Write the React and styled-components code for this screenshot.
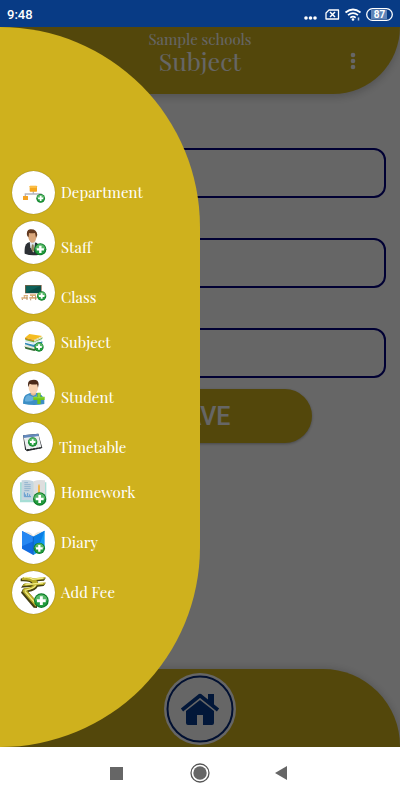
import React from 'react'
import styled, { createGlobalStyle } from 'styled-components'

const GlobalStyle = createGlobalStyle`
  * {
    box-sizing: border-box;
  }
  body {
    margin: 0;
    font-family: Roboto, sans-serif;
  }
`
const Root = styled.div`
  min-height: 100vh;
  display: flex;
  flex-direction: column;
  background: #ffffff;
`
const StatusBar = styled.div`
  display: flex;
  align-items: center;
  justify-content: space-between;
  height: 27px;
  padding: 2px 7px 0;
  background: #083b85;
  color: #ffffff;
`
const Time = styled.div`
  font-size: 13px;
  font-weight: 500;
`
const StatusIcons = styled.svg`
  width: 92px;
  height: 20px;
`
const Screen = styled.div`
  position: relative;
  flex: 1;
  display: flex;
  flex-direction: column;
  overflow: hidden;
`
const Header = styled.header`
  display: grid;
  grid-template-columns: 1fr auto 1fr;
  align-items: center;
  height: 67px;
  background: #cfb11d;
  border-bottom-right-radius: 67px;
  box-shadow: 0 3px 8px rgba(0, 0, 0, 0.2);
  color: #ffffff;
  font-family: 'Playfair Display', 'Liberation Serif', serif;
`
const Titles = styled.div`
  grid-column: 2;
  height: 67px;
  text-align: center;
`
const School = styled.div`
  padding-top: 2px;
  font-size: 15px;
  line-height: 20px;
`
const Title = styled.h1`
  margin: 0;
  font-size: 25px;
  font-weight: 400;
  line-height: 24px;
`
const MenuButton = styled.button`
  justify-self: end;
  margin-right: 35px;
  padding: 0;
  width: 24px;
  height: 24px;
  border: 0;
  background: none;
`
const Form = styled.form`
  flex: 1;
  display: flex;
  flex-direction: column;
  align-items: center;
  gap: 40px;
  padding: 54px 14px 0;
`
const Field = styled.input`
  width: 100%;
  height: 50px;
  padding: 0 12px;
  border: 2px solid #000080;
  border-radius: 12px;
  background: #ffffff;
  font-size: 16px;
`
const SaveButton = styled.button`
  width: 60%;
  height: 54px;
  margin-top: -29px;
  border: 0;
  border-radius: 27px;
  background: #cfb11d;
  box-shadow: 0 1px 3px rgba(0, 0, 0, 0.3);
  color: #ffffff;
  font-family: Roboto, sans-serif;
  font-size: 25px;
  font-weight: 500;
`
const Footer = styled.footer`
  display: flex;
  align-items: center;
  justify-content: center;
  height: 78px;
  padding-top: 2px;
  background: #cfb11d;
  border-top-right-radius: 77px;
  box-shadow: 0 0 8px rgba(0, 0, 0, 0.2);
`
const HomeLink = styled.a`
  display: flex;
  width: 72px;
  height: 72px;
`
const Scrim = styled.div`
  position: absolute;
  inset: 0;
  background: rgba(0, 0, 0, 0.6);
`
const Drawer = styled.nav`
  position: absolute;
  top: 0;
  bottom: 0;
  left: 0;
  width: 50%;
  display: flex;
  flex-direction: column;
  justify-content: center;
  background: #cfb11d;
  border-radius: 0 200px 200px 0;
`
const Menu = styled.ul`
  margin: 0;
  padding: 16px 0 0 12px;
  list-style: none;
`
const Item = styled.li`
  height: 50px;
`
const ItemLink = styled.a`
  display: flex;
  align-items: center;
  gap: 6px;
  height: 44px;
  color: #ffffff;
  font-family: 'Playfair Display', 'Liberation Serif', serif;
  font-size: 15px;
  line-height: 24px;
  text-decoration: none;
`
const Badge = styled.svg`
  flex: none;
  width: ${({ $small }) => ($small ? 41 : 43)}px;
  height: ${({ $small }) => ($small ? 41 : 43)}px;
  border-radius: 50%;
  background: #ffffff;
  box-shadow: 0 0 1px #6b5a10;
`
const Label = styled.span`
  padding-top: ${({ $low }) => ($low ? 10 : 0)}px;
`
const NavBar = styled.div`
  display: flex;
  align-items: center;
  justify-content: center;
  gap: 57px;
  height: 53px;
  padding-bottom: 1px;
  background: #ffffff;
`
const NavButton = styled.button`
  display: flex;
  width: 24px;
  height: 24px;
  padding: 0;
  border: 0;
  background: none;
`

const Plus = ({ x, y, r }) => (
  <g transform={`translate(${x} ${y}) scale(${r / 20})`}>
    <circle r="20" fill="#0b7a25" />
    <circle r="17" fill="#239b3e" />
    <path d="M-17 0A17 17 0 0 1 17 0Q0 -6 -17 0Z" fill="#58b868" />
    <path d="M-4 -12H4V-4H12V4H4V12H-4V4H-12V-4H-4Z" fill="#ffffff" />
  </g>
)

const DepartmentIcon = () => (
  <>
    <path d="M64 60V69M40 76V69H87V76" fill="none" stroke="#b5b5bd" strokeWidth="4" />
    <rect x="53" y="44" width="22" height="18" rx="2" fill="#f5a71c" />
    <rect x="54" y="45" width="20" height="6" fill="#fbbd45" />
    <rect x="33" y="75" width="15" height="12" rx="1" fill="#f5a324" />
    <Plus x={86} y={82} r={13} />
  </>
)

const StaffIcon = () => (
  <>
    <path d="M38 98Q36 73 46 66L58 61L75 66Q83 74 82 101Q58 106 38 98Z" fill="#2c3035" />
    <path d="M53 62L70 61L65 95L55 79Z" fill="#dce5ee" />
    <path d="M60 70L65 71L66 88L61 94L58 82Z" fill="#91825a" />
    <path d="M48 35Q47 54 55 62Q63 70 70 60Q76 50 74 35Z" fill="#d9a77c" />
    <path d="M46 46Q41 28 54 25Q74 23 76 42L72 50L69 36Q58 38 51 36L50 48Z" fill="#623a21" />
    <Plus x={85} y={85} r={18} />
  </>
)

const ClassIcon = () => (
  <>
    <rect x="39" y="42" width="50" height="25" fill="#8b6346" />
    <rect x="41" y="44" width="46" height="22" fill="#0d6058" />
    <path d="M42 65L86 44V65Z" fill="#0a4d46" />
    <path d="M35 72H48V76H35ZM54 70H72V75H54ZM28 79H47V83H28ZM52 78H74V83H52Z" fill="#dbae78" />
    <path d="M31 83V87M45 76V87M56 83V88M71 75V87M37 76V80M61 75V79" stroke="#b58d65" strokeWidth="3" />
    <Plus x={89} y={75} r={14} />
  </>
)

const SubjectIcon = () => (
  <>
    <path d="M38 75L46 72L91 78L67 90L40 83Z" fill="#386c35" />
    <path d="M39 68L65 75L91 65V72L66 84L39 77Z" fill="#e5e8d9" />
    <path d="M39 65L64 71L91 61V66L65 78L39 70Z" fill="#318ab9" />
    <path d="M40 55L66 62L90 52V58L65 69L40 63Z" fill="#d4e8ec" />
    <path d="M40 52L65 58L91 48V53L65 64L40 57Z" fill="#6eaa3a" />
    <path d="M39 50L52 39L91 45L66 57Z" fill="#f5bd22" />
    <path d="M39 50L66 57V61L39 54Z" fill="#d58b15" />
    <path d="M66 58L90 47V51L66 62Z" fill="#eee2bd" />
    <Plus x={81} y={78} r={14} />
  </>
)

const StudentIcon = () => (
  <>
    <path d="M33 98Q33 73 47 69L56 65H73Q93 69 97 88V99Q64 106 33 98Z" fill="#3c8fc5" />
    <path d="M39 91Q38 76 49 72L64 78L79 71Q67 96 39 91Z" fill="#67addb" />
    <path d="M56 62H72V70Q64 78 56 70Z" fill="#e7b78e" />
    <ellipse cx="64" cy="50" rx="14" ry="18" fill="#f7d2b1" />
    <path d="M49 49Q44 28 60 27Q79 24 80 40L78 50L75 40Q62 42 53 38Z" fill="#4b2a19" />
    <path d="M76 65H86V77H98V87H86V99H76V87H64V77H76Z" fill="#6fc419" />
    <path d="M78 67H84V79H96V82H64V79H78Z" fill="#91d638" />
  </>
)

const TimetableIcon = () => (
  <>
    <path d="M33 40L79 35L91 78L45 88L39 82Z" fill="#2a2d31" />
    <path d="M35 46L80 41L88 76L43 83Z" fill="#eef1f2" />
    <path d="M33 40L79 35L81 42L35 48Z" fill="#6389bd" />
    <path d="M40 54L82 48M42 63L84 57M43 72L87 66M49 48L57 80M69 45L78 77" stroke="#ced5d8" strokeWidth="1" />
    <path d="M44 84L89 77" stroke="#25282b" strokeWidth="4" strokeDasharray="7 2" />
    <Plus x={62} y={60} r={14} />
  </>
)

const HomeworkIcon = () => (
  <>
    <path d="M24 34H103V94H24Z" fill="#a6ded5" />
    <path d="M29 28Q48 25 64 31V90Q46 84 29 88Z" fill="#c6d6e0" />
    <path d="M64 31Q80 25 99 28V88Q81 84 64 90Z" fill="#dedede" />
    <path d="M37 35H48M37 41H56M37 47H56M37 53H56M37 59H52" stroke="#91b2ce" strokeWidth="3" />
    <path d="M37 64V77H57M41 75V70M47 75V66M53 75V70" fill="none" stroke="#5f9bcf" strokeWidth="3" />
    <path d="M78 45L81 38L84 45V73H78Z" fill="#f1b64c" />
    <Plus x={83} y={84} r={20} />
  </>
)

const DiaryIcon = () => (
  <>
    <path d="M36 33Q54 30 64 45Q74 30 94 32L64 58Z" fill="#e9e6df" />
    <path d="M30 30L64 47V102L30 83Z" fill="#116be0" />
    <path d="M64 47L98 29V83L64 102Z" fill="#159bf1" />
    <path d="M30 30L64 47V61L30 76Z" fill="#2687f2" />
    <path d="M64 47L98 29L80 78L64 91Z" fill="#0a7de5" />
    <path d="M64 47V102" stroke="#0750ac" strokeWidth="2" />
    <Plus x={82} y={82} r={17} />
  </>
)

const FeeIcon = () => (
  <>
    <path d="M26 23Q40 13 65 25L101 21L96 29L76 31Q79 35 79 39L101 37L95 45L77 47Q72 58 49 63L76 94L75 111L65 110L27 65L33 53Q57 55 61 47L27 50L35 39L61 41Q57 29 26 31Z" fill="#454011" />
    <path d="M30 21Q42 14 65 22L102 18L96 25L73 28Q78 32 77 37L102 34L96 41L75 43Q69 55 44 58L76 92L71 107L31 61L36 51Q58 51 63 43L31 45L38 37L63 38Q58 26 30 27Z" fill="#b7ab28" />
    <path d="M36 20Q50 17 63 25L94 21M40 41L93 36M38 58Q66 54 71 43M39 61L71 98" fill="none" stroke="#f1eb83" strokeWidth="4" />
    <Plus x={88} y={89} r={22} />
  </>
)

const items = [
  { label: 'Department', icon: DepartmentIcon },
  { label: 'Staff', icon: StaffIcon, low: true },
  { label: 'Class', icon: ClassIcon, low: true },
  { label: 'Subject', icon: SubjectIcon },
  { label: 'Student', icon: StudentIcon, low: true },
  { label: 'Timetable', icon: TimetableIcon, low: true, small: true },
  { label: 'Homework', icon: HomeworkIcon },
  { label: 'Diary', icon: DiaryIcon },
  { label: 'Add Fee', icon: FeeIcon }
]

const MenuItem = ({ label, icon: Icon, low, small }) => (
  <Item>
    <ItemLink href="#">
      <Badge viewBox={small ? '0 0 123 123' : '0 0 129 129'} $small={small} aria-hidden="true">
        <Icon />
      </Badge>
      <Label $low={low}>{label}</Label>
    </ItemLink>
  </Item>
)

const Status = () => (
  <StatusBar>
    <Time>9:48</Time>
    <StatusIcons viewBox="0 0 92 20" fill="none">
      <g fill="#ffffff">
        <circle cx="5" cy="13" r="1.8" />
        <circle cx="9.5" cy="13" r="1.8" />
        <circle cx="14" cy="13" r="1.8" />
      </g>
      <path d="M28 5H37.5V14H25V8Z" stroke="#ffffff" strokeWidth="1.3" strokeLinejoin="round" />
      <path d="M29 7L34 12M34 7L29 12" stroke="#ffffff" strokeWidth="1.5" />
      <path d="M44.5 7.5Q52 1.5 59.5 7.5M47 10.2Q52 6.2 57 10.2M49.3 12.7Q52 10.7 54.7 12.7" stroke="#ffffff" strokeWidth="1.7" />
      <circle cx="52" cy="14.5" r="1.3" fill="#ffffff" />
      <path d="M57.5 12.5V15.5" stroke="#b7c8e0" strokeWidth="1.5" />
      <rect x="65.7" y="3.7" width="25.6" height="11.6" rx="5.8" stroke="#ffffff" strokeWidth="1.3" />
      <rect x="70" y="5" width="16" height="9" fill="#5f84b7" />
      <text x="78.5" y="13" fill="#ffffff" fontFamily="Roboto" fontSize="10" fontWeight="700" textAnchor="middle">87</text>
    </StatusIcons>
  </StatusBar>
)

const HomeIcon = () => (
  <svg width="72" height="72" viewBox="0 0 72 72" aria-hidden="true">
    <circle cx="36" cy="36" r="36" fill="#ffffff" />
    <circle cx="36" cy="36" r="32.5" fill="#ffffff" stroke="#052a7a" strokeWidth="2" />
    <path d="M18 37L36 22.5L54 37" fill="none" stroke="#053a90" strokeWidth="3.6" strokeLinejoin="round" />
    <path d="M44 21H50V33L44 28Z" fill="#053a90" />
    <path d="M36 27L50 38V50Q50 52 48 52H39V42H33V52H24Q22 52 22 50V38Z" fill="#053a90" />
  </svg>
)

const App = () => {
  return (
    <Root>
      <GlobalStyle />
      <Status />
      <Screen>
        <Header>
          <Titles>
            <School>Sample schools</School>
            <Title>Subject</Title>
          </Titles>
          <MenuButton type="button" aria-label="More options">
            <svg width="24" height="24" viewBox="0 0 24 24" fill="#ffffff">
              <circle cx="12" cy="6" r="2.3" />
              <circle cx="12" cy="12" r="2.3" />
              <circle cx="12" cy="18" r="2.3" />
            </svg>
          </MenuButton>
        </Header>
        <Form>
          <Field aria-label="Department" />
          <Field aria-label="Class" />
          <Field aria-label="Subject" />
          <SaveButton type="button">SAVE</SaveButton>
        </Form>
        <Footer>
          <HomeLink href="#" aria-label="Home">
            <HomeIcon />
          </HomeLink>
        </Footer>
        <Scrim />
        <Drawer>
          <Menu>
            {items.map(item => (
              <MenuItem key={item.label} {...item} />
            ))}
          </Menu>
        </Drawer>
      </Screen>
      <NavBar>
        <NavButton type="button" aria-label="Recent apps">
          <svg width="24" height="24" viewBox="0 0 24 24">
            <rect x="3" y="6" width="13" height="13" fill="#666666" />
          </svg>
        </NavButton>
        <NavButton type="button" aria-label="Home screen">
          <svg width="24" height="24" viewBox="0 0 24 24">
            <circle cx="12" cy="12" r="9" fill="none" stroke="#555555" strokeWidth="1.3" />
            <circle cx="12" cy="12" r="6.7" fill="#666666" />
          </svg>
        </NavButton>
        <NavButton type="button" aria-label="Back">
          <svg width="24" height="24" viewBox="0 0 24 24">
            <path d="M18 5V19L6 12Z" fill="#666666" />
          </svg>
        </NavButton>
      </NavBar>
    </Root>
  )
}

export default App
